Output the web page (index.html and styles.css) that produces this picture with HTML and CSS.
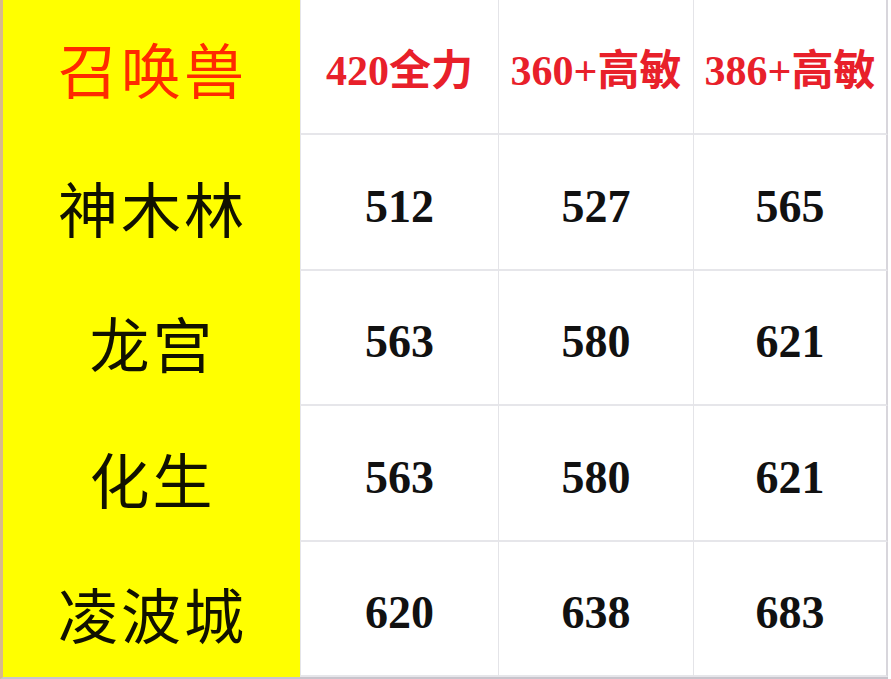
FILE: index.html
```html
<!DOCTYPE html>
<html lang="zh">
<head>
<meta charset="utf-8">
<title>召唤兽</title>
<link rel="stylesheet" href="styles.css">
</head>
<body>
<div class="sheet">
  <div class="cell name head">召唤兽</div>
  <div class="cell val head">420全力</div>
  <div class="cell val head">360+高敏</div>
  <div class="cell val head">386+高敏</div>

  <div class="cell name">神木林</div>
  <div class="cell val">512</div>
  <div class="cell val">527</div>
  <div class="cell val">565</div>

  <div class="cell name">龙宫</div>
  <div class="cell val">563</div>
  <div class="cell val">580</div>
  <div class="cell val">621</div>

  <div class="cell name">化生</div>
  <div class="cell val">563</div>
  <div class="cell val">580</div>
  <div class="cell val">621</div>

  <div class="cell name">凌波城</div>
  <div class="cell val">620</div>
  <div class="cell val">638</div>
  <div class="cell val">683</div>
</div>
</body>
</html>
```

FILE: styles.css
```css
html, body {
  margin: 0;
  padding: 0;
  background: #ffffff;
}

.sheet {
  width: 885px;
  height: 677px;
  display: grid;
  grid-template-columns: 297px 198px 195px 195px;
  grid-template-rows: 135px 136px 135px 136px 135px;
  border-left: 3px solid #d9b98a;
  border-bottom: 2px solid #c8c4cc;
}

.cell {
  display: flex;
  align-items: center;
  justify-content: center;
  box-sizing: border-box;
}

.name {
  background: #ffff00;
  color: #111100;
  font-family: "Noto Sans CJK SC", sans-serif;
  font-size: 60px;
  letter-spacing: 3px;
  padding-left: 2px;
  padding-top: 6px;
}

.name.head {
  color: #ff2a00;
  padding-top: 0;
}

.val {
  border-left: 1px solid #e4e4e8;
  border-bottom: 2px solid #e6e6ea;
  font-family: "Liberation Serif", "Noto Sans CJK SC", serif;
  font-weight: bold;
  font-size: 46px;
  color: #111111;
  padding-top: 8px;
}

.val:nth-child(4n) {
  border-right: 2px solid #d8d6dc;
}

.val.head {
  color: #e8202a;
  font-size: 42px;
  white-space: nowrap;
  padding-top: 0;
  letter-spacing: 0;
}
```
